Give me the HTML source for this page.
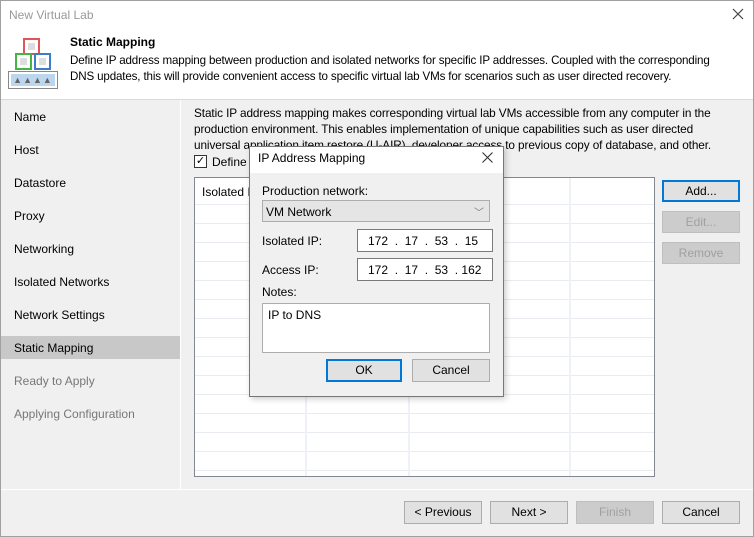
<!DOCTYPE html>
<html><head><style>
*{box-sizing:border-box;margin:0;padding:0}
body{width:754px;height:537px;font-family:"Liberation Sans",sans-serif;font-size:12px;color:#000;background:#f0f0f0;position:relative;overflow:hidden}
.a{position:absolute}
.win{left:0;top:0;width:754px;height:537px;border:1px solid #a0a0a0;background:#f0f0f0}
.btn{position:absolute;background:#e1e1e1;border:1px solid #adadad;text-align:center;line-height:20px;font-size:12px}
.dis{background:#ccc;border-color:#bfbfbf;color:#a0a0a0}
.nav{position:absolute;left:14px;font-size:12px}
.hl{position:absolute;left:195px;width:459px;height:1px;background:#e8ecf0}
.vl{position:absolute;top:178px;width:2px;height:298px;background:#eef2f7}
.box{position:absolute;background:#fff;border:1px solid #7a7a7a}
.nw{white-space:nowrap}
</style></head><body>
<div class="a win"></div>
<div class="a" style="left:1px;top:1px;width:752px;height:98px;background:#fff"></div>
<div class="a" style="left:9px;top:8px;color:#999;font-size:12px">New Virtual Lab</div>
<svg class="a" style="left:732px;top:8px" width="12" height="12"><path d="M1 1L11 11M11 1L1 11" stroke="#444" stroke-width="1.2"/></svg>
<!-- icon -->
<div class="a" style="left:23px;top:38px;width:17px;height:17px;border:2px solid #e05555;background:#fff"><div style="margin:3px;width:7px;height:7px;background:#ddd"></div></div>
<div class="a" style="left:15px;top:53px;width:17px;height:17px;border:2px solid #44b544;background:#fff"><div style="margin:3px;width:7px;height:7px;background:#ddd"></div></div>
<div class="a" style="left:34px;top:53px;width:17px;height:17px;border:2px solid #3d7cc9;background:#fff"><div style="margin:3px;width:7px;height:7px;background:#ddd"></div></div>
<div class="a" style="left:8px;top:71px;width:50px;height:18px;border:1px solid #888;background:#fff"><div style="margin:2px;height:12px;background:#bcd6ee;font-size:9px;color:#666;text-align:center;line-height:12px;letter-spacing:1px">▲▲▲▲</div></div>
<div class="a" style="left:70px;top:35px;font-weight:bold">Static Mapping</div>
<div class="a nw" style="left:70px;top:53px;line-height:16px;font-size:11.6px;letter-spacing:-0.15px">Define IP address mapping between production and isolated networks for specific IP addresses. Coupled with the corresponding<br>DNS updates, this will provide convenient access to specific virtual lab VMs for scenarios such as user directed recovery.</div>
<div class="a" style="left:1px;top:99px;width:752px;height:1px;background:#d9d9d9"></div>
<div class="a" style="left:180px;top:100px;width:1px;height:389px;background:#fff"></div>
<!-- nav -->
<div class="a" style="left:1px;top:336px;width:179px;height:23px;background:#c8c8c8"></div>
<div class="nav" style="top:110px">Name</div>
<div class="nav" style="top:143px">Host</div>
<div class="nav" style="top:176px">Datastore</div>
<div class="nav" style="top:209px">Proxy</div>
<div class="nav" style="top:242px">Networking</div>
<div class="nav" style="top:275px">Isolated Networks</div>
<div class="nav" style="top:308px">Network Settings</div>
<div class="nav" style="top:341px">Static Mapping</div>
<div class="nav" style="top:374px;color:#777">Ready to Apply</div>
<div class="nav" style="top:407px;color:#777">Applying Configuration</div>
<!-- content -->
<div class="a nw" style="left:194px;top:105px;line-height:16px;font-size:11.8px;letter-spacing:-0.1px">Static IP address mapping makes corresponding virtual lab VMs accessible from any computer in the<br>production environment. This enables implementation of unique capabilities such as user directed<br>universal application item restore (U-AIR), developer access to previous copy of database, and other.</div>
<div class="a" style="left:194px;top:155px;width:13px;height:13px;border:1px solid #333;background:#fff;font-size:11px;line-height:11px;text-align:center">✓</div>
<div class="a" style="left:212px;top:155px">Define</div>
<div class="box" style="left:194px;top:177px;width:461px;height:300px;border-color:#828790"></div>
<div class="a" style="left:202px;top:185px">Isolated IP</div>
<div class="hl" style="top:204px"></div><div class="hl" style="top:223px"></div><div class="hl" style="top:242px"></div><div class="hl" style="top:261px"></div><div class="hl" style="top:280px"></div><div class="hl" style="top:299px"></div><div class="hl" style="top:318px"></div><div class="hl" style="top:337px"></div><div class="hl" style="top:356px"></div><div class="hl" style="top:375px"></div><div class="hl" style="top:394px"></div><div class="hl" style="top:413px"></div><div class="hl" style="top:432px"></div><div class="hl" style="top:451px"></div><div class="hl" style="top:470px"></div>
<div class="vl" style="left:305px"></div><div class="vl" style="left:408px"></div><div class="vl" style="left:569px"></div>
<div class="btn" style="left:662px;top:180px;width:78px;height:22px;border:2px solid #0078d7;line-height:18px">Add...</div>
<div class="btn dis" style="left:662px;top:211px;width:78px;height:22px">Edit...</div>
<div class="btn dis" style="left:662px;top:242px;width:78px;height:22px">Remove</div>
<div class="a" style="left:1px;top:489px;width:752px;height:1px;background:#fff"></div>
<div class="btn" style="left:404px;top:501px;width:78px;height:23px">&lt; Previous</div>
<div class="btn" style="left:490px;top:501px;width:78px;height:23px">Next &gt;</div>
<div class="btn dis" style="left:576px;top:501px;width:78px;height:23px">Finish</div>
<div class="btn" style="left:662px;top:501px;width:78px;height:23px">Cancel</div>
<!-- dialog -->
<div class="a" style="left:249px;top:146px;width:255px;height:251px;border:1px solid #777;background:#f0f0f0;box-shadow:2px 2px 6px rgba(0,0,0,.2)"></div>
<div class="a" style="left:250px;top:147px;width:253px;height:26px;background:#fff"></div>
<div class="a" style="left:258px;top:151px">IP Address Mapping</div>
<svg class="a" style="left:482px;top:152px" width="11" height="11"><path d="M0.5 0.5L10.5 10.5M10.5 0.5L0.5 10.5" stroke="#333" stroke-width="1.1"/></svg>
<div class="a" style="left:262px;top:184px">Production network:</div>
<div class="a" style="left:262px;top:200px;width:228px;height:22px;background:#e5e5e5;border:1px solid #adadad;padding:4px 3px">VM Network<span style="position:absolute;right:5px;top:3px;color:#777;font-size:10px">﹀</span></div>
<div class="a" style="left:262px;top:234px">Isolated IP:</div>
<div class="box" style="left:357px;top:229px;width:136px;height:23px;padding:4px 0 0 10px;word-spacing:0">172 &nbsp;. &nbsp;17 &nbsp;. &nbsp;53 &nbsp;. &nbsp;15</div>
<div class="a" style="left:262px;top:263px">Access IP:</div>
<div class="box" style="left:357px;top:258px;width:136px;height:23px;padding:4px 0 0 10px">172 &nbsp;. &nbsp;17 &nbsp;. &nbsp;53 &nbsp;. 162</div>
<div class="a" style="left:262px;top:285px">Notes:</div>
<div class="box" style="left:262px;top:303px;width:228px;height:50px;border-color:#adadad;padding:4px 5px">IP to DNS</div>
<div class="btn" style="left:326px;top:359px;width:76px;height:23px;border:2px solid #0078d7;line-height:19px">OK</div>
<div class="btn" style="left:412px;top:359px;width:78px;height:23px">Cancel</div>
</body></html>
